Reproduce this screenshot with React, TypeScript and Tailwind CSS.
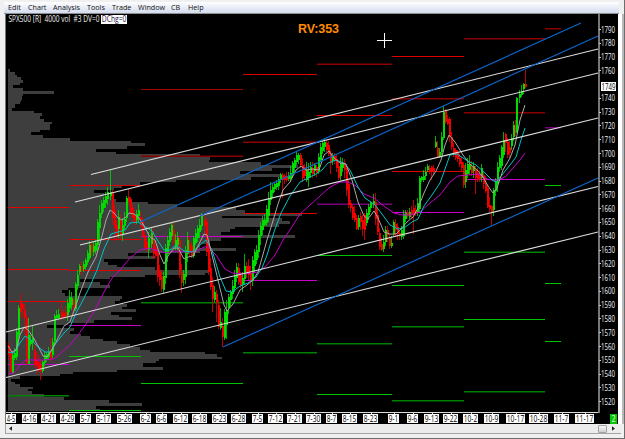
type Candle = [number, number, number, number, number, 0 | 1];

const menu = [
  { label: "Edit", width: "w-5" },
  { label: "Chart", width: "w-[25px]" },
  { label: "Analysis", width: "w-[34px]" },
  { label: "Tools", width: "w-[25px]" },
  { label: "Trade", width: "w-[26px]" },
  { label: "Window", width: "w-[33px]" },
  { label: "CB", width: "w-[17px]" },
  { label: "Help", width: "w-5" },
];

// [y, right edge] of each volume-at-price step
const profile: [number, number][] = [
  [69, 10], [72, 15], [75, 17], [77, 21], [80, 23], [83, 20], [85, 13], [88, 23],
  [91, 54], [94, 23], [96, 22], [100, 21], [102, 20], [104, 15], [108, 12], [111, 34],
  [113, 42], [116, 40], [119, 44], [122, 52], [124, 50], [127, 50], [130, 40], [132, 31],
  [135, 43], [138, 70], [141, 131], [143, 145], [146, 127], [149, 96], [152, 116], [154, 200],
  [157, 210], [160, 209], [162, 261], [165, 298], [168, 272], [171, 240], [174, 283], [177, 251],
  [180, 176], [182, 140], [185, 122], [188, 114], [190, 94], [193, 104], [196, 113], [199, 116],
  [202, 148], [204, 177], [207, 236], [210, 245], [213, 302], [216, 222], [218, 282], [221, 290],
  [224, 279], [227, 235], [229, 230], [232, 221], [235, 295], [238, 221], [241, 210], [244, 200],
  [248, 236], [251, 200], [253, 128], [256, 155], [259, 104], [262, 108], [265, 117], [267, 155],
  [270, 208], [273, 205], [275, 145], [277, 110], [279, 80], [282, 100], [285, 110], [288, 68],
  [290, 62], [293, 65], [296, 122], [299, 120], [301, 115], [304, 127], [307, 122], [309, 136],
  [312, 111], [315, 119], [317, 132], [320, 94], [323, 68], [325, 47], [328, 74], [331, 70],
  [334, 81], [336, 90], [339, 103], [341, 117], [344, 130], [347, 140], [350, 150], [352, 205],
  [354, 217], [357, 222], [359, 159], [361, 156], [363, 143], [367, 163], [370, 117], [372, 73],
  [374, 60], [376, 20], [379, 11], [382, 15], [384, 20], [387, 33], [389, 28], [391, 32],
  [394, 44], [397, 64], [400, 109], [403, 142], [406, 96], [409, 100], [411, 8],
];

const RED = "#e00000";
const DARK_RED = "#8a0000";
const GREEN = "#00c400";
const DARK_GREEN = "#008000";
const MAGENTA = "#cc00cc";
const DIM_MAGENTA = "#77007a";

const levels: { from: number; to: number; lines: [number, string][] }[] = [
  { from: 8, to: 69, lines: [[207, RED], [269, RED], [301, RED], [364, MAGENTA], [395, DARK_GREEN]] },
  { from: 69, to: 141, lines: [[185, RED], [239, RED], [270, RED], [325, MAGENTA], [356, GREEN], [410, GREEN]] },
  { from: 141, to: 243, lines: [[89, "#a80000"], [155.5, DARK_RED], [236, MAGENTA], [302, DARK_GREEN], [383, GREEN]] },
  { from: 243, to: 317, lines: [[74, RED], [141.5, DARK_RED], [213, RED], [280, MAGENTA], [352, DARK_GREEN]] },
  { from: 317, to: 392, lines: [[63.5, DARK_RED], [115, RED], [203.5, DIM_MAGENTA], [255, GREEN], [343, DARK_GREEN], [394, GREEN]] },
  { from: 392, to: 464, lines: [[56, RED], [98, DARK_RED], [171, RED], [212, MAGENTA], [285, GREEN], [326, DARK_GREEN], [400, DARK_GREEN]] },
  { from: 464, to: 545, lines: [[38, DARK_RED], [112, DARK_RED], [179, MAGENTA], [251.5, DARK_GREEN], [319, GREEN], [391, DARK_GREEN]] },
  { from: 545, to: 561, lines: [[28, DARK_RED], [127, DIM_MAGENTA], [185, GREEN], [283, GREEN], [341, GREEN]] },
];

// x, high, low, body top, body bottom, up
const candles: Candle[] = [
  [8, 342, 360, 345, 355, 0], [10, 350, 374, 353, 372, 0], [12, 352, 374, 355, 373, 1], [14, 348, 360, 353, 358, 1],
  [16, 328, 360, 332, 357, 1], [18, 305, 345, 308, 335, 1], [20, 294, 318, 302, 312, 0], [22, 303, 318, 304, 309, 0],
  [24, 304, 335, 310, 318, 0], [26, 315, 365, 318, 363, 0], [28, 318, 364, 335, 364, 1], [30, 335, 346, 340, 344, 1],
  [32, 325, 350, 338, 343, 1], [34, 342, 368, 350, 365, 0], [36, 352, 374, 360, 366, 0], [38, 355, 372, 362, 369, 0],
  [40, 360, 380, 365, 371, 0], [42, 360, 373, 362, 371, 1], [44, 352, 366, 355, 363, 1], [46, 352, 362, 354, 359, 1],
  [48, 347, 360, 352, 357, 1], [50, 338, 362, 350, 360, 0], [52, 338, 358, 342, 355, 1], [54, 314, 345, 316, 341, 1],
  [56, 310, 320, 315, 318, 1], [58, 309, 320, 314, 318, 1], [61, 302, 320, 312, 317, 0], [63, 310, 319, 313, 317, 0],
  [65, 306, 318, 312, 316, 0], [67, 299, 321, 303, 315, 1], [69, 290, 312, 297, 308, 1], [71, 292, 310, 298, 305, 1],
  [73, 298, 315, 300, 308, 0], [75, 282, 311, 284, 309, 1], [77, 270, 290, 275, 286, 1], [79, 264, 275, 266, 272, 1],
  [81, 262, 275, 266, 270, 0], [83, 261, 272, 264, 269, 1], [85, 258, 270, 260, 267, 1], [87, 250, 265, 253, 262, 1],
  [89, 241, 260, 245, 258, 1], [91, 241, 256, 244, 252, 0], [93, 242, 256, 246, 252, 1], [95, 240, 254, 243, 251, 1],
  [97, 219, 250, 222, 245, 1], [99, 205, 240, 213, 228, 1], [101, 200, 218, 203, 214, 1], [103, 197, 212, 200, 208, 1],
  [105, 192, 208, 196, 203, 1], [107, 187, 205, 192, 199, 1], [110, 169, 200, 192, 196, 1], [112, 190, 225, 193, 218, 0],
  [114, 205, 242, 210, 228, 0], [116, 220, 240, 225, 236, 0], [118, 210, 238, 217, 229, 1], [120, 214, 240, 220, 235, 0],
  [122, 218, 241, 225, 234, 1], [124, 212, 230, 219, 226, 1], [126, 196, 222, 198, 218, 1], [128, 189, 206, 197, 202, 0],
  [130, 197, 216, 199, 213, 0], [132, 205, 222, 208, 218, 0], [134, 213, 225, 215, 222, 0], [136, 210, 224, 214, 220, 1],
  [138, 204, 222, 210, 216, 1], [140, 212, 228, 217, 226, 0], [142, 218, 238, 222, 236, 0], [144, 232, 250, 235, 248, 0],
  [146, 238, 252, 242, 249, 0], [148, 232, 258, 238, 250, 1], [151, 227, 248, 233, 244, 1], [153, 228, 258, 240, 254, 0],
  [155, 245, 258, 248, 256, 0], [157, 250, 282, 253, 277, 0], [159, 265, 286, 270, 280, 0], [161, 272, 292, 276, 289, 0],
  [163, 272, 293, 276, 290, 1], [165, 244, 284, 248, 278, 1], [167, 236, 262, 240, 254, 1], [169, 228, 246, 232, 242, 1],
  [171, 222, 240, 225, 236, 1], [173, 223, 246, 230, 243, 0], [175, 234, 250, 240, 247, 1], [177, 232, 250, 238, 245, 1],
  [179, 236, 278, 240, 271, 0], [181, 264, 293, 272, 283, 0], [183, 270, 286, 274, 280, 1], [185, 246, 284, 250, 277, 1],
  [187, 232, 262, 240, 254, 1], [189, 236, 256, 244, 253, 0], [191, 242, 258, 246, 256, 0], [193, 236, 258, 238, 256, 1],
  [195, 229, 245, 233, 243, 1], [197, 225, 242, 228, 238, 1], [199, 219, 238, 225, 232, 1], [201, 213, 230, 216, 226, 1],
  [204, 215, 236, 220, 226, 0], [206, 218, 256, 222, 252, 0], [208, 240, 275, 245, 272, 0], [210, 258, 290, 268, 287, 0],
  [212, 277, 312, 285, 299, 0], [214, 286, 302, 292, 300, 1], [216, 290, 322, 294, 303, 0], [218, 300, 329, 305, 327, 0],
  [220, 308, 330, 322, 328, 1], [222, 318, 347, 326, 337, 0], [224, 309, 340, 312, 338, 1], [226, 300, 339, 310, 325, 1],
  [228, 294, 314, 297, 308, 1], [230, 290, 306, 292, 300, 1], [232, 280, 299, 286, 294, 1], [234, 270, 292, 276, 288, 1],
  [236, 263, 282, 267, 278, 1], [238, 263, 285, 268, 282, 0], [240, 272, 288, 275, 286, 0], [242, 272, 292, 278, 285, 1],
  [244, 254, 284, 266, 279, 1], [246, 262, 278, 266, 274, 0], [248, 259, 280, 266, 275, 0], [250, 266, 290, 273, 282, 0],
  [252, 256, 286, 260, 281, 1], [254, 249, 272, 252, 266, 1], [256, 245, 264, 250, 260, 1], [258, 230, 258, 235, 252, 1],
  [260, 222, 245, 226, 236, 1], [262, 216, 235, 220, 230, 1], [264, 214, 226, 220, 225, 1], [266, 205, 226, 209, 223, 1],
  [268, 192, 222, 198, 216, 1], [270, 182, 205, 190, 200, 1], [272, 183, 198, 187, 193, 1], [274, 182, 192, 184, 189, 1],
  [276, 180, 190, 183, 187, 1], [278, 177, 190, 179, 186, 1], [280, 173, 183, 175, 180, 1], [282, 173, 198, 175, 180, 0],
  [284, 174, 184, 176, 180, 0], [286, 172, 182, 176, 180, 0], [288, 172, 181, 176, 179, 1], [290, 166, 182, 173, 179, 1],
  [292, 161, 178, 163, 175, 1], [294, 158, 172, 160, 168, 1], [296, 152, 165, 155, 162, 1], [298, 153, 164, 155, 160, 1],
  [300, 153, 168, 155, 165, 0], [302, 158, 182, 165, 178, 0], [304, 164, 180, 167, 176, 0], [306, 162, 182, 170, 180, 1],
  [308, 163, 187, 172, 178, 1], [310, 162, 178, 167, 173, 1], [312, 162, 178, 168, 174, 0], [314, 163, 176, 165, 171, 1],
  [316, 165, 177, 167, 173, 0], [318, 153, 174, 157, 171, 1], [320, 143, 162, 147, 160, 1], [322, 140, 154, 143, 151, 1],
  [324, 139, 152, 142, 147, 1], [326, 140, 152, 143, 150, 0], [328, 141, 156, 145, 154, 0], [330, 150, 174, 153, 163, 0],
  [332, 153, 165, 156, 161, 1], [334, 153, 164, 156, 161, 0], [336, 155, 172, 159, 168, 0], [338, 162, 180, 166, 178, 0],
  [340, 157, 180, 163, 176, 1], [342, 158, 172, 163, 168, 1], [344, 159, 178, 163, 170, 0], [346, 166, 196, 168, 190, 0],
  [348, 180, 208, 184, 205, 0], [350, 200, 212, 203, 208, 0], [352, 205, 220, 207, 218, 0], [354, 206, 222, 213, 220, 0],
  [356, 215, 230, 218, 229, 0], [358, 215, 230, 218, 227, 1], [360, 212, 230, 216, 222, 0], [362, 215, 236, 220, 229, 0],
  [364, 213, 240, 215, 230, 0], [366, 209, 226, 213, 223, 1], [368, 204, 220, 207, 215, 1], [370, 201, 212, 203, 208, 1],
  [373, 194, 208, 201, 205, 1], [375, 193, 225, 202, 219, 0], [377, 207, 235, 215, 232, 0], [379, 228, 250, 233, 247, 0],
  [381, 238, 251, 244, 250, 0], [383, 235, 252, 242, 249, 1], [385, 226, 246, 230, 242, 1], [387, 226, 242, 230, 235, 0],
  [389, 234, 249, 238, 246, 0], [391, 236, 248, 243, 246, 1], [393, 220, 236, 222, 234, 1], [395, 219, 236, 224, 230, 0],
  [397, 223, 240, 227, 234, 0], [399, 230, 240, 233, 236, 0], [401, 226, 240, 230, 237, 1], [403, 210, 239, 214, 236, 1],
  [405, 210, 222, 213, 219, 1], [407, 210, 218, 212, 216, 0], [409, 208, 219, 212, 217, 1], [411, 206, 218, 210, 215, 0],
  [413, 200, 234, 208, 214, 0], [415, 205, 216, 210, 214, 0], [417, 198, 216, 203, 213, 1], [419, 176, 212, 178, 209, 1],
  [421, 176, 182, 177, 180, 1], [423, 170, 182, 176, 180, 1], [425, 167, 180, 172, 176, 1], [427, 164, 172, 166, 170, 1],
  [429, 165, 174, 168, 172, 0], [431, 166, 180, 167, 171, 0], [433, 165, 175, 168, 172, 0], [435, 136, 148, 142, 147, 1],
  [437, 141, 158, 148, 157, 0], [439, 148, 158, 152, 157, 1], [441, 132, 155, 137, 152, 1], [443, 106, 140, 112, 138, 1],
  [445, 109, 124, 111, 122, 0], [447, 115, 125, 119, 124, 0], [449, 117, 142, 119, 137, 0], [451, 132, 150, 137, 147, 0],
  [453, 143, 157, 148, 154, 0], [455, 148, 160, 150, 158, 0], [457, 150, 162, 153, 159, 0], [459, 154, 167, 158, 164, 0],
  [461, 157, 172, 162, 168, 0], [463, 162, 188, 165, 185, 0], [465, 163, 188, 170, 182, 1], [467, 158, 178, 164, 174, 1],
  [469, 155, 175, 164, 170, 1], [471, 161, 176, 166, 173, 0], [473, 162, 178, 166, 171, 1], [475, 166, 194, 170, 178, 0],
  [477, 168, 182, 173, 180, 0], [479, 170, 182, 174, 179, 0], [481, 164, 182, 168, 178, 1], [483, 171, 189, 175, 184, 0],
  [485, 176, 193, 183, 191, 0], [487, 185, 208, 188, 207, 0], [489, 197, 212, 205, 209, 0], [491, 205, 226, 206, 212, 0],
  [493, 188, 216, 190, 210, 1], [495, 178, 196, 181, 191, 1], [497, 162, 192, 167, 184, 1], [499, 155, 172, 158, 168, 1],
  [501, 145, 170, 147, 166, 1], [503, 132, 158, 140, 155, 1], [505, 133, 152, 134, 143, 0], [507, 138, 158, 142, 155, 0],
  [509, 141, 158, 147, 153, 0], [511, 134, 150, 138, 146, 1], [513, 121, 141, 125, 137, 1], [515, 120, 136, 126, 133, 0],
  [516, 97, 133, 98, 132, 1], [519, 90, 103, 94, 98, 1], [521, 85, 97, 91, 95, 1], [523, 83, 94, 84, 89, 1],
  [525, 70, 88, 84, 87, 0],
];

const averages = [
  {
    stroke: "#c400c4",
    points:
      "8,374 14,373 20,365 26,360 35,360 44,360 54,359 62,352 70,345 78,335 86,324 95,310 103,294 112,278 120,270 130,258 140,250 150,248 158,251 166,253 175,251 185,252 195,252 204,247 208,247 216,255 225,269 232,273 245,274 258,272 266,266 275,255 283,240 290,230 300,214 310,205 320,196 330,187 340,182 348,182 356,186 364,194 374,198 385,207 394,213 402,215 410,215 420,212 430,203 440,195 450,182 458,176 468,175 478,174 487,179 496,181 505,177 514,167 520,160 525,153",
  },
  {
    stroke: "#00c4c4",
    points:
      "8,352 14,353 20,343 25,336 31,340 38,347 45,352 50,352 56,343 64,333 70,327 76,313 82,302 90,286 97,270 104,249 111,234 118,232 125,230 130,223 138,222 144,226 152,231 158,241 164,250 170,250 176,245 184,251 192,252 199,246 206,240 212,250 220,277 226,291 232,292 240,286 248,283 256,277 262,268 267,255 274,232 281,213 290,196 300,182 308,178 316,174 322,170 328,163 336,160 344,163 350,170 358,187 365,198 375,205 382,214 390,225 398,229 404,228 412,222 418,219 424,206 432,195 440,183 445,169 450,155 457,154 466,160 476,165 485,173 492,180 496,182 502,175 510,165 516,157 521,140 525,128",
  },
  {
    stroke: "#a8a8a8",
    points:
      "8,346 12,352 16,350 20,335 24,327 28,330 33,337 38,346 43,356 47,357 52,350 58,338 64,326 70,322 75,308 80,293 88,272 96,257 102,236 106,220 110,210 114,213 118,218 122,220 126,217 129,213 134,214 139,218 143,224 150,237 155,240 160,255 164,264 168,256 174,248 178,248 184,259 188,257 193,256 199,244 204,234 207,235 212,255 218,280 224,305 227,311 233,304 240,290 247,285 253,280 258,272 262,258 267,240 272,224 278,204 283,190 290,182 296,170 301,166 306,170 312,169 319,170 324,155 329,151 333,157 340,163 346,164 352,180 358,202 364,216 368,219 374,211 378,218 384,232 390,234 396,234 401,229 407,222 413,217 418,208 424,193 430,180 436,171 441,160 445,145 449,135 455,142 463,155 470,164 477,170 483,177 488,186 493,193 497,188 503,170 510,158 515,145 520,120 525,105",
  },
];

const trendLines: [number, number, number, number, string][] = [
  [91, 174.5, 598, 49, "#dcdcdc"],
  [75, 202, 598, 73, "#dcdcdc"],
  [80, 245, 598, 118, "#dcdcdc"],
  [6, 332, 598, 186.5, "#dcdcdc"],
  [6, 377.5, 598, 232, "#dcdcdc"],
  [140, 222, 581, 23, "#0a68d0"],
  [200, 216, 598, 36, "#0a68d0"],
  [223, 347, 598, 178, "#0a68d0"],
];

const prices = Array.from({ length: 28 }, (_, i) => 1790 - i * 10).filter((p) => p !== 1750);

// label, box left, box right
const dates: [string, number, number][] = [
  ["4-5", 6, 16], ["4-16", 22, 37], ["4-21", 41, 56], ["4-29", 60, 75], ["5-7", 80, 91], ["5-17", 96, 111],
  ["5-26", 117, 132], ["6-2", 140, 151], ["6-6", 156, 167], ["6-12", 173, 188], ["6-18", 192, 207], ["6-23", 212, 227],
  ["6-28", 231, 246], ["7-5", 252, 263], ["7-12", 268, 283], ["7-21", 287, 302], ["7-30", 306, 321], ["8-7", 326, 337],
  ["8-15", 342, 357], ["8-23", 363, 378], ["9-1", 388, 399], ["9-6", 407, 418], ["9-13", 424, 439], ["9-22", 443, 458],
  ["10-2", 463, 478], ["10-9", 484, 499], ["10-17", 506, 525], ["10-28", 529, 548], ["11-7", 554, 569], ["11-17", 575, 594],
];

function profilePath() {
  let d = "M8 69";
  profile.forEach(([y, x]) => {
    d += `V${y}H${x}`;
  });
  return `${d}H8Z`;
}

interface NarrowTextProps {
  x: number;
  y: number;
  width: number;
  scale?: number;
  size?: number;
  fill?: string;
  children: string | number;
}

// Condensed label: glyphs squeezed horizontally, then fitted to `width`
function NarrowText({ x, y, width, scale = 0.72, size = 8.5, fill, children }: NarrowTextProps) {
  return (
    <text
      transform={`translate(${x} ${y}) scale(${scale} 1)`}
      fontSize={size}
      fill={fill}
      textLength={width / scale}
      lengthAdjust="spacingAndGlyphs"
      className="whitespace-pre"
    >
      {children}
    </text>
  );
}

function PriceAxis() {
  return (
    <g fill="#f2f2f2">
      <rect x="598" y="14" width="2" height="399" fill="#777" />
      {prices.map((price) => {
        const y = 29.5 + ((1790 - price) / 10) * 13.785;
        return (
          <g key={price}>
            <rect x="599" y={Math.round(y - 0.5)} width="2" height="1" fill="#ccc" />
            <NarrowText x={601} y={Math.round(y + 3)} width={14}>
              {price}
            </NarrowText>
          </g>
        );
      })}
      <rect x="601" y="82" width="15" height="9" fill="#fff" />
      <NarrowText x={601.5} y={90} width={14} fill="#000">
        1749
      </NarrowText>
    </g>
  );
}

function DateAxis() {
  return (
    <g fill="#000">
      <rect x="6" y="412" width="593" height="1" fill="#ddd" />
      {dates.map(([label, left, right]) => (
        <g key={label}>
          <rect x={Math.round((left + right) / 2)} y="412" width="1" height="3" fill="#ddd" />
          <rect x={left} y="414" width={right - left} height="9" fill="#fff" />
          <NarrowText x={left + 0.8} y={422} width={right - left - 1.6}>
            {label}
          </NarrowText>
        </g>
      ))}
      <rect x="610" y="414" width="7" height="10" fill="#00c800" />
      <NarrowText x={611.5} y={422} width={4} fill="#fff">
        2
      </NarrowText>
    </g>
  );
}

function PriceChart() {
  return (
    <svg
      viewBox="6 14 612 410"
      className="block h-[410px] w-[612px] bg-black font-['Open_Sans',sans-serif]"
    >
      <path d={profilePath()} fill="#3e3e3e" shapeRendering="crispEdges" />
      {levels.map(({ from, to, lines }) =>
        lines.map(([y, color]) => (
          <rect
            key={`${from}-${y}`}
            x={from}
            y={y}
            width={to - from}
            height={color === DARK_RED || color === DARK_GREEN || color === DIM_MAGENTA ? 1.5 : 1}
            fill={color}
          />
        ))
      )}
      {candles.map(([x, high, low, top, bottom, up]) => (
        <g key={x} fill={up ? "#00dc00" : "#f00000"}>
          <rect x={x} y={high} width="1" height={low - high} opacity="0.8" />
          <rect x={x} y={top} width="2" height={bottom - top} />
        </g>
      ))}
      {averages.map(({ stroke, points }) => (
        <polyline key={stroke} points={points} fill="none" stroke={stroke} strokeWidth="1" />
      ))}
      {trendLines.map(([x1, y1, x2, y2, color]) => (
        <line key={`${x1}-${y1}`} x1={x1} y1={y1} x2={x2} y2={y2} stroke={color} strokeWidth="1.1" />
      ))}
      <path d="M377 40.5H392M384.5 33V48" stroke="#fff" />
      <NarrowText x={8.5} y={22} width={91} scale={0.76} size={8.3} fill="#eee">
        {"SPX500 [R]  4000 vol  #3 DV=0"}
      </NarrowText>
      <rect x="101" y="15" width="26" height="9" fill="#fff" />
      <NarrowText x={101.8} y={22} width={24.6} scale={0.76} size={8.3} fill="#26103c">
        DChg=0
      </NarrowText>
      <text x="298" y="33" fontSize="12.5" fontWeight="700" fill="#ff8c00" textLength="41" className="font-['Liberation_Sans',sans-serif]">
        RV:353
      </text>
      <DateAxis />
      <PriceAxis />
    </svg>
  );
}

export default function App() {
  return (
    <div className="flex h-[439px] w-[625px] flex-col overflow-hidden border-b border-r border-[#6d6d6d] bg-[#f0f0f0]">
      <div className="mt-[2px] ml-1 flex h-3 w-[615px] shrink-0 items-center border-b border-[#8e8e8e] bg-linear-to-b from-white to-[#d3dbee] pt-px pl-1 font-['Open_Sans',sans-serif] text-[7.2px] leading-none text-[#111]">
        {menu.map(({ label, width }) => (
          <span key={label} className={`${width} shrink-0 whitespace-nowrap`}>
            {label}
          </span>
        ))}
      </div>
      <div className="flex shrink-0">
        <div className="w-[6px] border-r border-[#777]" />
        <PriceChart />
        <div className="w-[4px] bg-white" />
        <div className="w-[2px] bg-[#b8b8b8]" />
      </div>
      <div className="ml-[5px] flex h-[10px] w-[616px] shrink-0 items-center border-b border-l border-[#a5a5a5] bg-[#ececec] px-[3px]">
        <svg viewBox="0 0 4 6" className="h-[5px] w-[3px]">
          <path d="M4 0V6L0 3Z" fill="#222" />
        </svg>
        <div className="ml-auto h-2 w-[9px] rounded-[1px] border border-[#a4a4a4] bg-linear-to-b from-[#f8f8f8] to-[#cfcfcf]" />
        <svg viewBox="0 0 4 6" className="mr-[3px] ml-[5px] h-[5px] w-[3px]">
          <path d="M0 0V6L4 3Z" fill="#222" />
        </svg>
      </div>
    </div>
  );
}
